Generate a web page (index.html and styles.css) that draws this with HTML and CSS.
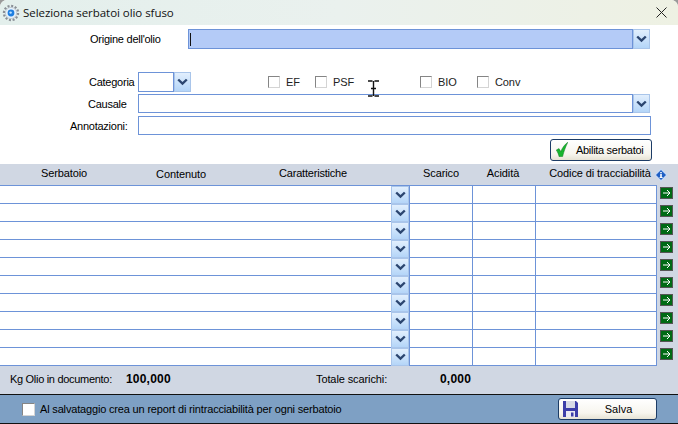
FILE: index.html
```html
<!DOCTYPE html>
<html lang="en">
<head>
    <meta charset="UTF-8">
    <meta name="viewport" content="width=device-width, initial-scale=1.0">
    <title>Seleziona serbatoi olio sfuso</title>
    <link rel="stylesheet" href="styles.css">
</head>
<body>
<div class="window">

    <!-- Title bar -->
    <div class="titlebar">
        <svg class="app-icon" width="18" height="18" viewBox="0 0 18 18">
            <circle cx="9" cy="9" r="7" fill="none" stroke="#8a8f96" stroke-width="2.4" stroke-dasharray="2 1.66"/>
            <circle cx="9" cy="9" r="5.6" fill="#e8f2fa" stroke="#b9c4cf" stroke-width="0.8"/>
            <circle cx="9" cy="9" r="3.4" fill="#1f7fe0"/>
            <circle cx="8.6" cy="8.6" r="1.2" fill="#bfe2ff"/>
        </svg>
        <span class="title-text">Seleziona serbatoi olio sfuso</span>
        <svg class="close-icon" width="11" height="11" viewBox="0 0 11 11">
            <path d="M0.5 0.5 L10.5 10.5 M10.5 0.5 L0.5 10.5" stroke="#222" stroke-width="1" fill="none"/>
        </svg>
    </div>

    <!-- Form -->
    <div class="form">
        <div class="row row-origine">
            <label class="lbl lbl-origine">Origine dell'olio</label>
            <div class="field field-blue"><span class="caret"></span></div>
            <button class="drop"><svg width="11" height="8" viewBox="0 0 11 8"><path d="M1.2 1.5 L5.5 5.6 L9.8 1.5" fill="none" stroke="#2c4670" stroke-width="2.4"/></svg></button>
        </div>

        <div class="row row-categoria">
            <label class="lbl lbl-categoria">Categoria</label>
            <div class="field field-cat"></div>
            <button class="drop"><svg width="11" height="8" viewBox="0 0 11 8"><path d="M1.2 1.5 L5.5 5.6 L9.8 1.5" fill="none" stroke="#2c4670" stroke-width="2.4"/></svg></button>
            <div class="checks">
                <span class="check check-ef"><i class="box"></i>EF</span>
                <span class="check check-psf"><i class="box"></i>PSF</span>
                <span class="check check-bio"><i class="box"></i>BIO</span>
                <span class="check"><i class="box"></i>Conv</span>
            </div>
        </div>

        <div class="row row-causale">
            <label class="lbl lbl-causale">Causale</label>
            <div class="field field-wide"></div>
            <button class="drop"><svg width="11" height="8" viewBox="0 0 11 8"><path d="M1.2 1.5 L5.5 5.6 L9.8 1.5" fill="none" stroke="#2c4670" stroke-width="2.4"/></svg></button>
        </div>

        <div class="row row-note">
            <label class="lbl lbl-note">Annotazioni:</label>
            <div class="field field-note"></div>
        </div>

        <div class="row row-action">
            <button class="btn btn-abilita">
                <svg width="12" height="15" viewBox="0 0 12 15"><path d="M0.3 8 L3 6.6 L4.8 9.6 C6.2 6 8.4 2.6 11.8 0.3 C9.8 4.4 7.8 9.4 6.6 14.6 L3.2 14.8 C2.6 12.2 1.6 10 0.3 8 Z" fill="#17b52e" stroke="#0d7a1e" stroke-width="0.5"/></svg>
                <span>Abilita serbatoi</span>
            </button>
        </div>
    </div>

    <!-- Grid -->
    <div class="grid-head">
        <span class="col col-serb">Serbatoio</span>
        <span class="col col-cont">Contenuto</span>
        <span class="col col-car">Caratteristiche</span>
        <span class="col col-scar">Scarico</span>
        <span class="col col-acid">Acidità</span>
        <span class="col col-cod">Codice di tracciabilità</span>
        <svg class="info" width="14" height="14" viewBox="0 0 14 14">
            <path d="M7 0.3 L13.7 7 L7 13.7 L0.3 7 Z" fill="#c6daf6"/>
            <path d="M7 2 L12 7 L7 12 L2 7 Z" fill="#1f5fc4"/>
            <path d="M6.2 4 H7.8 V5.2 H6.2 Z M6.2 6 H7.8 V9 H8.6 V10 H5.6 V9 H6.2 Z" fill="#fff"/>
        </svg>
    </div>

    <div class="grid-body">
        <div class="grid-table">
            <div class="g-row"><div class="cell-main"></div><button class="drop"><svg width="11" height="8" viewBox="0 0 11 8"><path d="M1.2 1.5 L5.5 5.6 L9.8 1.5" fill="none" stroke="#2c4670" stroke-width="2.4"/></svg></button><div class="cell"></div><div class="cell"></div><div class="cell cell-last"></div></div>
            <div class="g-row"><div class="cell-main"></div><button class="drop"><svg width="11" height="8" viewBox="0 0 11 8"><path d="M1.2 1.5 L5.5 5.6 L9.8 1.5" fill="none" stroke="#2c4670" stroke-width="2.4"/></svg></button><div class="cell"></div><div class="cell"></div><div class="cell cell-last"></div></div>
            <div class="g-row"><div class="cell-main"></div><button class="drop"><svg width="11" height="8" viewBox="0 0 11 8"><path d="M1.2 1.5 L5.5 5.6 L9.8 1.5" fill="none" stroke="#2c4670" stroke-width="2.4"/></svg></button><div class="cell"></div><div class="cell"></div><div class="cell cell-last"></div></div>
            <div class="g-row"><div class="cell-main"></div><button class="drop"><svg width="11" height="8" viewBox="0 0 11 8"><path d="M1.2 1.5 L5.5 5.6 L9.8 1.5" fill="none" stroke="#2c4670" stroke-width="2.4"/></svg></button><div class="cell"></div><div class="cell"></div><div class="cell cell-last"></div></div>
            <div class="g-row"><div class="cell-main"></div><button class="drop"><svg width="11" height="8" viewBox="0 0 11 8"><path d="M1.2 1.5 L5.5 5.6 L9.8 1.5" fill="none" stroke="#2c4670" stroke-width="2.4"/></svg></button><div class="cell"></div><div class="cell"></div><div class="cell cell-last"></div></div>
            <div class="g-row"><div class="cell-main"></div><button class="drop"><svg width="11" height="8" viewBox="0 0 11 8"><path d="M1.2 1.5 L5.5 5.6 L9.8 1.5" fill="none" stroke="#2c4670" stroke-width="2.4"/></svg></button><div class="cell"></div><div class="cell"></div><div class="cell cell-last"></div></div>
            <div class="g-row"><div class="cell-main"></div><button class="drop"><svg width="11" height="8" viewBox="0 0 11 8"><path d="M1.2 1.5 L5.5 5.6 L9.8 1.5" fill="none" stroke="#2c4670" stroke-width="2.4"/></svg></button><div class="cell"></div><div class="cell"></div><div class="cell cell-last"></div></div>
            <div class="g-row"><div class="cell-main"></div><button class="drop"><svg width="11" height="8" viewBox="0 0 11 8"><path d="M1.2 1.5 L5.5 5.6 L9.8 1.5" fill="none" stroke="#2c4670" stroke-width="2.4"/></svg></button><div class="cell"></div><div class="cell"></div><div class="cell cell-last"></div></div>
            <div class="g-row"><div class="cell-main"></div><button class="drop"><svg width="11" height="8" viewBox="0 0 11 8"><path d="M1.2 1.5 L5.5 5.6 L9.8 1.5" fill="none" stroke="#2c4670" stroke-width="2.4"/></svg></button><div class="cell"></div><div class="cell"></div><div class="cell cell-last"></div></div>
            <div class="g-row"><div class="cell-main"></div><button class="drop"><svg width="11" height="8" viewBox="0 0 11 8"><path d="M1.2 1.5 L5.5 5.6 L9.8 1.5" fill="none" stroke="#2c4670" stroke-width="2.4"/></svg></button><div class="cell"></div><div class="cell"></div><div class="cell cell-last"></div></div>
        </div>
        <div class="arrows">
            <div class="arrow"><svg width="8" height="8" viewBox="0 0 8 8"><path d="M0 4 H7 M4 1 L7 4 L4 7" fill="none" stroke="#fff" stroke-width="1"/></svg></div>
            <div class="arrow"><svg width="8" height="8" viewBox="0 0 8 8"><path d="M0 4 H7 M4 1 L7 4 L4 7" fill="none" stroke="#fff" stroke-width="1"/></svg></div>
            <div class="arrow"><svg width="8" height="8" viewBox="0 0 8 8"><path d="M0 4 H7 M4 1 L7 4 L4 7" fill="none" stroke="#fff" stroke-width="1"/></svg></div>
            <div class="arrow"><svg width="8" height="8" viewBox="0 0 8 8"><path d="M0 4 H7 M4 1 L7 4 L4 7" fill="none" stroke="#fff" stroke-width="1"/></svg></div>
            <div class="arrow"><svg width="8" height="8" viewBox="0 0 8 8"><path d="M0 4 H7 M4 1 L7 4 L4 7" fill="none" stroke="#fff" stroke-width="1"/></svg></div>
            <div class="arrow"><svg width="8" height="8" viewBox="0 0 8 8"><path d="M0 4 H7 M4 1 L7 4 L4 7" fill="none" stroke="#fff" stroke-width="1"/></svg></div>
            <div class="arrow"><svg width="8" height="8" viewBox="0 0 8 8"><path d="M0 4 H7 M4 1 L7 4 L4 7" fill="none" stroke="#fff" stroke-width="1"/></svg></div>
            <div class="arrow"><svg width="8" height="8" viewBox="0 0 8 8"><path d="M0 4 H7 M4 1 L7 4 L4 7" fill="none" stroke="#fff" stroke-width="1"/></svg></div>
            <div class="arrow"><svg width="8" height="8" viewBox="0 0 8 8"><path d="M0 4 H7 M4 1 L7 4 L4 7" fill="none" stroke="#fff" stroke-width="1"/></svg></div>
            <div class="arrow"><svg width="8" height="8" viewBox="0 0 8 8"><path d="M0 4 H7 M4 1 L7 4 L4 7" fill="none" stroke="#fff" stroke-width="1"/></svg></div>
        </div>
    </div>

    <!-- Totals -->
    <div class="totals">
        <span class="tot-label">Kg Olio in documento:</span>
        <strong class="tot-kg">100,000</strong>
        <span class="tot-scarichi">Totale scarichi:</span>
        <strong class="tot-val">0,000</strong>
    </div>

    <!-- Footer -->
    <div class="footer">
        <i class="box box-footer"></i>
        <span class="footer-text">Al salvataggio crea un report di rintracciabilità per ogni serbatoio</span>
        <button class="btn btn-salva">
            <svg width="15" height="16" viewBox="0 0 15 16">
                <path d="M0 0 H13 L15 2 V16 H0 Z" fill="#3d3fa8"/>
                <rect x="3" y="0" width="9" height="7" fill="#d8dbe6"/>
                <rect x="3" y="10" width="9" height="6" fill="#e9e9f2"/>
                <rect x="8" y="11.5" width="2.5" height="4" fill="#3d3fa8"/>
            </svg>
            <span class="salva-text">Salva</span>
        </button>
    </div>

    <!-- Mouse pointer caught in the shot -->
    <svg class="ibeam" width="11" height="17" viewBox="0 0 11 17">
        <path d="M0 1 H4.5 M6.5 1 H11 M5.5 1 V16 M0 16 H4.5 M6.5 16 H11 M3 8.5 H8" stroke="#111" stroke-width="1.4" fill="none"/>
    </svg>
</div>
</body>
</html>
```

FILE: styles.css
```css
* {
    margin: 0;
    padding: 0;
    box-sizing: border-box;
}
html, body {
    width: 678px;
    height: 424px;
    overflow: hidden;
    background: #9a9a9a;
}
body {
    font-family: 'Liberation Sans', Arial, sans-serif;
    font-size: 11px;
    letter-spacing: -0.1px;
    color: #000;
}
.window {
    position: relative;
    width: 678px;
    height: 424px;
    background: white;
    border-radius: 7px 7px 0 0;
    overflow: hidden;
}


.titlebar {
    display: flex;
    align-items: center;
    height: 25px;
    padding-left: 2px;
    background: linear-gradient(90deg, #e3efec, #eaf1ee 50%, #eef1e3);
}
.app-icon {
    margin-right: 3px;
}
.title-text {
    font-family: 'Open Sans', sans-serif;
    font-size: 11.5px;
    letter-spacing: -0.05px;
    color: #111;
}
.close-icon {
    margin-left: auto;
    margin-right: 11px;
}


.form {
    height: 139px;
    padding-top: 4px;
}
.row {
    display: flex;
    align-items: center;
}
.lbl {
    white-space: nowrap;
    letter-spacing: -0.25px;
}
.field {
    height: 100%;
    background: white;
    border: 1px solid #6d93d8;
}
.field-blue {
    width: 445px;
    background: #b4cbf7;
    display: flex;
    align-items: center;
    padding-left: 1px;
}
.caret {
    width: 1px;
    height: 13px;
    background: #111;
}
.field-cat {
    width: 36px;
}
.field-wide {
    width: 495px;
}
.field-note {
    width: 513px;
}
.drop {
    display: flex;
    align-items: center;
    justify-content: center;
    width: 17px;
    flex-shrink: 0;
    height: 100%;
    border: 1px solid #a9c5ea;
    background: linear-gradient(#e2effd, #b4d5f8);
}

.row-origine {
    height: 20px;
}
.lbl-origine {
    width: 98px;
    margin-left: 90px;
}
.row-categoria {
    height: 20px;
    margin-top: 23px;
}
.lbl-categoria {
    width: 49px;
    margin-left: 89px;
}
.checks {
    display: flex;
    margin-left: 77px;
}
.check {
    display: flex;
    align-items: center;
    gap: 6px;
    color: #222;
}
.check-ef {
    width: 47px;
}
.check-psf {
    width: 105px;
}
.check-bio {
    width: 57px;
}
.box {
    display: block;
    width: 12px;
    height: 12px;
    background: white;
    border: 1px solid #d4d4d4;
    border-top-color: #858585;
    border-left-color: #858585;
}
.row-causale {
    height: 19px;
    margin-top: 2px;
}
.lbl-causale {
    width: 50px;
    margin-left: 88px;
}
.row-note {
    height: 19px;
    margin-top: 3px;
}
.lbl-note {
    width: 68px;
    margin-left: 70px;
}
.row-action {
    justify-content: flex-end;
    height: 23px;
    margin-top: 3px;
    padding-right: 26px;
}

.btn {
    display: flex;
    align-items: center;
    font-family: inherit;
    font-size: 11px;
    letter-spacing: -0.3px;
    white-space: nowrap;
    color: #000;
    border: 1px solid #1c3c66;
    border-radius: 3px;
    background: linear-gradient(#fff, #f7f5ee 70%, #e6e2d4);
}
.btn-abilita {
    width: 102px;
    height: 22px;
    padding-left: 5px;
    gap: 8px;
}


.grid-head {
    position: relative;
    height: 21px;
    background: #d0d7e3;
}
.col {
    position: absolute;
    top: 3px;
    transform: translateX(-50%);
    white-space: nowrap;
}
.col-serb { left: 64px; }
.col-cont { left: 181px; top: 4px; }
.col-car { left: 313px; letter-spacing: -0.2px; }
.col-scar { left: 441px; }
.col-acid { left: 503px; }
.col-cod { left: 600px; }
.info {
    position: absolute;
    left: 654px;
    top: 4px;
}


.grid-body {
    display: flex;
    height: 181px;
    background: #d0d7e3;
}
.grid-table {
    width: 657px;
    border-top: 1px solid #6d93d8;
    background: white;
}
.g-row {
    display: flex;
    height: 18px;
    border-bottom: 1px solid #6d93d8;
}
.cell-main {
    width: 392px;
}
.cell {
    width: 63px;
    border-left: 1px solid #6d93d8;
}
.cell-last {
    width: 122px;
    border-right: 1px solid #6d93d8;
}
.g-row .drop {
    width: 18px;
    height: 18px;
}
.arrows {
    display: flex;
    flex-direction: column;
    padding-left: 3px;
    padding-top: 2px;
}
.arrow {
    display: flex;
    align-items: center;
    justify-content: center;
    width: 13px;
    height: 12px;
    margin-bottom: 6px;
    background: #006a14;
    border: 1px solid #555;
}


.totals {
    display: flex;
    align-items: center;
    height: 28px;
    padding-left: 10px;
    padding-bottom: 3px;
    white-space: nowrap;
    background: #d0d7e3;
}
.tot-label {
    width: 116px;
    letter-spacing: -0.3px;
}
.tot-kg {
    width: 190px;
    font-size: 12px;
    letter-spacing: 0.2px;
}
.tot-scarichi {
    width: 124px;
}
.tot-val {
    font-size: 12px;
    letter-spacing: 0.2px;
}


.footer {
    display: flex;
    align-items: center;
    height: 30px;
    padding-left: 22px;
    background: #7ea0c4;
    border-top: 1px solid #111;
    border-bottom: 1px solid #111;
}
.box-footer {
    width: 13px;
    height: 13px;
    margin-right: 5px;
    flex-shrink: 0;
}
.footer-text {
    width: 518px;
    letter-spacing: -0.17px;
}
.btn-salva {
    width: 99px;
    height: 22px;
    padding-left: 4px;
}
.salva-text {
    flex: 1;
    text-align: center;
    padding-left: 3px;
    letter-spacing: 0;
}

.ibeam {
    position: absolute;
    left: 368px;
    top: 80px;
}
```
